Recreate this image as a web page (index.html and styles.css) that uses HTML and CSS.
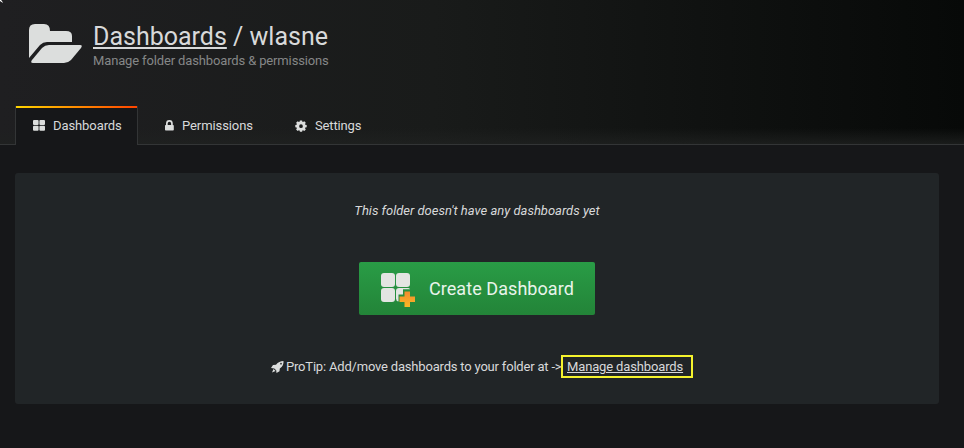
FILE: index.html
```html
<!DOCTYPE html>
<html lang="en">
<head>
<meta charset="utf-8">
<title>Dashboards / wlasne</title>
<link rel="stylesheet" href="styles.css">
</head>
<body>
<svg class="pointer" width="3" height="3" viewBox="0 0 3 3"><path d="M0 0H2L1 1H2L3 3 0 1Z"/></svg>
<header class="page-header">
  <div class="heading">
    <svg class="folder" width="53" height="40" viewBox="0 0 53 40"><path d="M0 34V6Q0 0 6 0H15Q21 0 21 7H37Q43 7 43 12V18H18Q14 18 11 21Z"/><path d="M3 36 13 24Q16 21 20 21H51Q54 21 52 24L42 36Q39 39 35 39H4Q1 39 3 36Z"/></svg>
    <div>
      <h1 class="title"><a href="#">Dashboards</a> / wlasne</h1>
      <p class="subtitle">Manage folder dashboards &amp; permissions</p>
    </div>
  </div>
  <nav class="tabs">
    <a class="tab active"><svg width="12" height="11" viewBox="0 0 12 11"><rect width="5.6" height="5" rx="1"/><rect x="6.4" width="5.6" height="5" rx="1"/><rect y="5.8" width="5.6" height="5" rx="1"/><rect x="6.4" y="5.8" width="5.6" height="5" rx="1"/></svg>Dashboards</a>
    <a class="tab permissions"><svg width="9" height="11" viewBox="0 0 9 11"><path fill-rule="evenodd" d="M1 5V3.500a3.400 3.400 0 0 1 6.800 0V5H8q.8 0 .8.8v4q0 .8-.8.8H.8Q0 10.600 0 9.800v-4Q0 5 .8 5ZM2.700 5h3.400V3.500a1.700 1.700 0 0 0-3.400 0Z"/></svg>Permissions</a>
    <a class="tab settings"><svg width="12" height="12" viewBox="0 0 12 12"><path fill-rule="evenodd" d="M4.900.4h2.200l.3 1.400.6.300 1.300-.8 1.500 1.500-.8 1.300.3.700 1.400.3v2.100l-1.400.3-.3.700.8 1.300-1.500 1.500L8 10.200l-.6.300-.3 1.300H4.900l-.3-1.300-.7-.3-1.200.8-1.600-1.500.8-1.300-.3-.7-1.300-.3V5.100l1.300-.3.300-.7-.8-1.300 1.600-1.500 1.200.8.700-.3ZM6 4.300a1.850 1.850 0 1 0 0 3.700 1.850 1.850 0 0 0 0-3.700Z"/></svg>Settings</a>
  </nav>
</header>
<main class="panel">
  <p class="empty">This folder doesn't have any dashboards yet</p>
  <a class="create"><svg width="34" height="35" viewBox="0 0 34 35"><g fill="#e3e5e2"><rect width="14" height="14" rx="3"/><rect x="15" width="14" height="14" rx="3"/><rect y="15" width="14" height="14" rx="3"/><path d="M18 15h9q1.500 0 2 1.200h-7v5.300h-4.500v7q-2.500-.5-2.500-3V18q0-3 3-3Z"/></g><path fill="url(#plus)" d="M23.500 18.500h5.500v5h5v5.500h-5v5h-5.500v-5h-5v-5.500h5Z"/><defs><linearGradient id="plus" x1="0" y1="0" x2="0" y2="1"><stop stop-color="#f28a2e"/><stop offset="1" stop-color="#f9b824"/></linearGradient></defs></svg>Create Dashboard</a>
  <p class="protip"><svg width="13" height="12" viewBox="0 0 13 12"><path fill-rule="evenodd" d="M12.500 0Q13 4.500 8.800 7.500L8.500 10.300 5.500 12 5.200 9.200 3.300 7.400 0 7 2 4 5 3.700Q8 0 12.500 0ZM10 1.800a.8.8 0 1 0 0 1.700.8.8 0 0 0 0-1.700ZM2.500 8 4.600 10 1 11.500Z"/></svg><span class="tip">ProTip: Add/move dashboards to your folder at -&gt;</span><span class="highlight"><a href="#">Manage dashboards</a></span></p>
</main>
</body>
</html>
```
FILE: styles.css
```css
* { box-sizing: border-box; }
body { margin: 0; height: 448px; overflow: hidden; background: #161719; color: #d8d9da; font: 13px/20px Roboto, sans-serif; }
h1, p { margin: 0; font-weight: 400; }
a { color: inherit; }
svg { display: block; flex: none; fill: #dcdedd; }
.pointer { position: absolute; top: 0; left: 0; fill: #fff; }
.page-header { height: 145px; display: flex; flex-direction: column; justify-content: space-between; padding: 24px 15px 0; background: linear-gradient(transparent 128px, #1f2120cc 144px), linear-gradient(90deg, #1f1f21, #191b1a 45%, #070908); border-bottom: 1px solid #333536; }
.heading { display: flex; padding-left: 14px; gap: 11px; }
.title { font-size: 25px; line-height: 28px; margin-top: -1px; white-space: nowrap; }
.title a { text-decoration-thickness: 2px; text-underline-offset: 2px; }
.subtitle { color: #858787; letter-spacing: -0.14px; }
.tabs { display: flex; height: 39px; margin-bottom: -1px; }
.tab { display: flex; align-items: center; gap: 8px; height: 39px; padding-left: 17px; letter-spacing: -0.09px; }
.tab.active { position: relative; width: 123px; border: solid #333536; border-width: 0 1px; background: #161719; }
.tab.active::before { content: ""; position: absolute; inset: 0 0 auto; height: 2px; background: linear-gradient(90deg, #ffd500, #ff4400); }
.permissions { padding-left: 27px; }
.settings { padding-left: 42px; }
.settings { letter-spacing: -0.12px; }
.panel { display: flex; flex-direction: column; align-items: center; width: 924px; height: 231px; margin: 28px 0 0 15px; padding-top: 28px; background: #212527; border-radius: 3px; }
.empty { font-style: italic; }
.create { display: flex; align-items: center; gap: 14px; width: 236px; height: 53px; margin-top: 41px; padding-left: 22px; border-radius: 2px; background: linear-gradient(#299c46, #238438); color: #e9f4eb; font-size: 18px; letter-spacing: 0.06px; white-space: nowrap; }
.create svg { margin-top: 3px; }
.protip { display: flex; align-items: center; width: 422px; margin: 40px 0 0 10px; white-space: nowrap; }
.protip svg { margin-right: 2px; }
.tip { width: 275px; letter-spacing: -0.19px; }
.highlight { width: 132px; height: 23px; padding-left: 4px; border: 2px solid #f5f32d; line-height: 19px; letter-spacing: -0.14px; }
```
